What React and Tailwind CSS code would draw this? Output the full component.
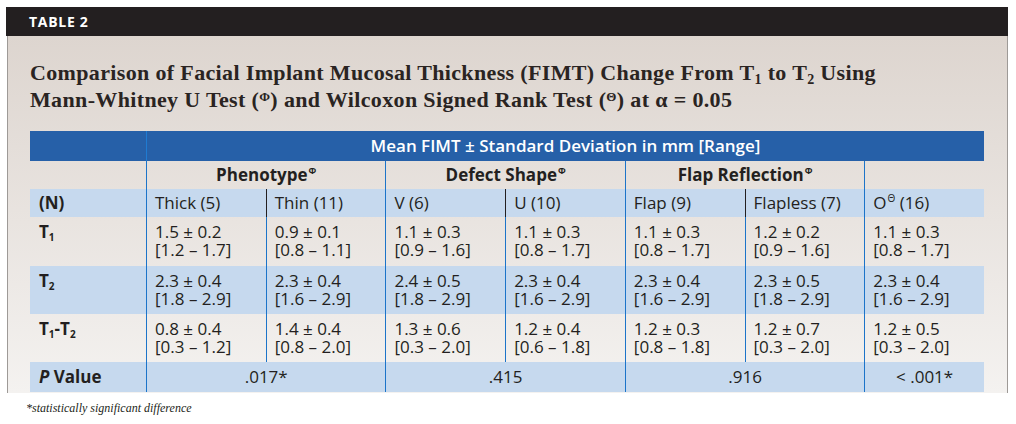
import React from "react";

const sans = { fontFamily: '"Open Sans", "Liberation Sans", sans-serif' };
const serif = { fontFamily: '"Liberation Serif", "DejaVu Serif", serif' };

function Val({ a, b }) {
  return (
    <div className="leading-[18px]">
      <div>{a}</div>
      <div>{b}</div>
    </div>
  );
}

const rows = [
  {
    label: (
      <span>
        T<sub className="text-[10px] font-bold">1</sub>
      </span>
    ),
    bg: "",
    cells: [
      ["1.5 ± 0.2", "[1.2 – 1.7]"],
      ["0.9 ± 0.1", "[0.8 – 1.1]"],
      ["1.1 ± 0.3", "[0.9 – 1.6]"],
      ["1.1 ± 0.3", "[0.8 – 1.7]"],
      ["1.1 ± 0.3", "[0.8 – 1.7]"],
      ["1.2 ± 0.2", "[0.9 – 1.6]"],
      ["1.1 ± 0.3", "[0.8 – 1.7]"],
    ],
    h: "h-[49px]",
  },
  {
    label: (
      <span>
        T<sub className="text-[10px] font-bold">2</sub>
      </span>
    ),
    bg: "bg-[#c6d9ee]",
    cells: [
      ["2.3 ± 0.4", "[1.8 – 2.9]"],
      ["2.3 ± 0.4", "[1.6 – 2.9]"],
      ["2.4 ± 0.5", "[1.8 – 2.9]"],
      ["2.3 ± 0.4", "[1.6 – 2.9]"],
      ["2.3 ± 0.4", "[1.6 – 2.9]"],
      ["2.3 ± 0.5", "[1.8 – 2.9]"],
      ["2.3 ± 0.4", "[1.6 – 2.9]"],
    ],
    h: "h-[48px]",
  },
  {
    label: (
      <span>
        T<sub className="text-[10px] font-bold">1</sub>-T<sub className="text-[10px] font-bold">2</sub>
      </span>
    ),
    bg: "",
    cells: [
      ["0.8 ± 0.4", "[0.3 – 1.2]"],
      ["1.4 ± 0.4", "[0.8 – 2.0]"],
      ["1.3 ± 0.6", "[0.3 – 2.0]"],
      ["1.2 ± 0.4", "[0.6 – 1.8]"],
      ["1.2 ± 0.3", "[0.8 – 1.8]"],
      ["1.2 ± 0.7", "[0.3 – 2.0]"],
      ["1.2 ± 0.5", "[0.3 – 2.0]"],
    ],
    h: "h-[48px]",
  },
];

const nLabels = ["Thick (5)", "Thin (11)", "V (6)", "U (10)", "Flap (9)", "Flapless (7)"];

export default function App() {
  return (
    <div className="w-[1016px] h-[424px] bg-white relative overflow-hidden text-[#231f20]">
      <div className="ml-[6px] mt-[7px] w-[1002px] h-[29px] bg-[#231f20] flex items-center pl-[23px]">
        <span className="text-white font-bold text-[14px] tracking-[0.7px]" style={sans}>
          TABLE 2
        </span>
      </div>
      <div className="ml-[7px] w-[1001px] h-[357px] border-l border-r border-[#9e9a97] bg-gradient-to-b from-[#ddd5cf] to-[#f4f2f0] pl-[22px] pt-[23px]">
        <div className="text-[22px] leading-[27px] font-bold tracking-[0.35px] text-[#2a2422]" style={serif}>
          <div>
            Comparison of Facial Implant Mucosal Thickness (FIMT) Change From T<sub className="text-[14px]">1</sub> to T
            <sub className="text-[14px]">2</sub> Using
          </div>
          <div>
            Mann-Whitney U Test (<sup className="text-[13px]">Φ</sup>) and Wilcoxon Signed Rank Test (
            <sup className="text-[13px]">Θ</sup>) at α = 0.05
          </div>
        </div>

        <div
          className="mt-[18px] w-[954px] grid grid-cols-[116px_repeat(7,1fr)] text-[17px]"
          style={sans}
        >
          {/* header */}
          <div className="h-[30px] bg-[#2660a8]" />
          <div className="col-span-7 h-[30px] bg-[#2660a8] border-l border-[#1f7bd2] flex items-center justify-center text-white font-semibold">
            Mean FIMT ± Standard Deviation in mm [Range]
          </div>

          {/* group */}
          <div className="h-[28px]" />
          {["Phenotype", "Defect Shape", "Flap Reflection"].map((g) => (
            <div key={g} className="col-span-2 h-[28px] border-l border-[#1c74c9] flex items-center justify-center font-bold">
              {g}
              <sup className="text-[9px] ml-[1px]">Φ</sup>
            </div>
          ))}
          <div className="h-[28px] border-l border-[#1c74c9]" />

          {/* N row */}
          <div className="h-[28px] bg-[#c6d9ee] flex items-center pl-[9px] font-bold">(N)</div>
          {nLabels.map((n, i) => (
            <div
              key={n}
              className={`h-[28px] bg-[#c6d9ee] flex items-center pl-[8px] border-l ${
                i % 2 === 0 ? "border-[#1c74c9]" : "border-[#231f20]"
              }`}
            >
              {n}
            </div>
          ))}
          <div className="h-[28px] bg-[#c6d9ee] flex items-center pl-[8px] border-l border-[#1c74c9]">
            O<sup className="text-[10px] ml-[1px]">Θ</sup>&nbsp;(16)
          </div>

          {rows.map((r, ri) => (
            <React.Fragment key={ri}>
              <div className={`${r.h} ${r.bg} pl-[9px] pt-[6px] font-bold leading-[18px]`}>{r.label}</div>
              {r.cells.map((c, ci) => (
                <div key={ci} className={`${r.h} ${r.bg} pl-[8px] pt-[6px] border-l border-[#1c74c9]`}>
                  <Val a={c[0]} b={c[1]} />
                </div>
              ))}
            </React.Fragment>
          ))}

          {/* P row */}
          <div className="h-[30px] bg-[#c6d9ee] flex items-center pl-[9px] font-bold">
            <span className="italic">P</span>&nbsp;Value
          </div>
          <div className="col-span-2 h-[30px] bg-[#c6d9ee] border-l border-[#1c74c9] flex items-center justify-center">
            .017*
          </div>
          <div className="col-span-2 h-[30px] bg-[#c6d9ee] border-l border-[#1c74c9] flex items-center justify-center">
            .415
          </div>
          <div className="col-span-2 h-[30px] bg-[#c6d9ee] border-l border-[#1c74c9] flex items-center justify-center">
            .916
          </div>
          <div className="h-[30px] bg-[#c6d9ee] border-l border-[#1c74c9] flex items-center justify-center">
            &lt; .001*
          </div>
        </div>
      </div>
      <div className="pl-[26px] pt-[6px] text-[12px] italic" style={serif}>
        *statistically significant difference
      </div>
    </div>
  );
}
